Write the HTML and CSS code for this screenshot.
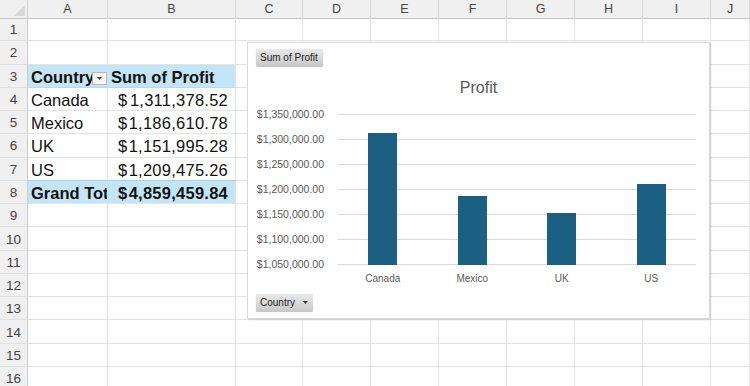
FILE: index.html
```html
<!DOCTYPE html>
<html>
<head>
<meta charset="utf-8">
<link rel="stylesheet" href="styles.css">
</head>
<body>
<div class="sheet">
  <div class="row head">
    <div class="corner"></div>
    <div class="ch">A</div><div class="ch">B</div><div class="ch">C</div><div class="ch">D</div><div class="ch">E</div><div class="ch">F</div><div class="ch">G</div><div class="ch">H</div><div class="ch">I</div><div class="ch">J</div>
  </div>
  <div class="row"><div class="rh">1</div><div class="c"></div><div class="c"></div><div class="c"></div><div class="c"></div><div class="c"></div><div class="c"></div><div class="c"></div><div class="c"></div><div class="c"></div><div class="c"></div></div>
  <div class="row"><div class="rh">2</div><div class="c"></div><div class="c"></div><div class="c"></div><div class="c"></div><div class="c"></div><div class="c"></div><div class="c"></div><div class="c"></div><div class="c"></div><div class="c"></div></div>
  <div class="row"><div class="rh">3</div>
    <div class="c pv-head pv-a"><span class="txt">Country</span><span class="dd"><svg width="7" height="5" viewBox="0 0 7 5"><path d="M1 1h5L3.5 4z" fill="#444"/></svg></span></div>
    <div class="c pv-head"><span class="txt">Sum of Profit</span></div>
    <div class="c"></div><div class="c"></div><div class="c"></div><div class="c"></div><div class="c"></div><div class="c"></div><div class="c"></div><div class="c"></div></div>
  <div class="row"><div class="rh">4</div><div class="c t"><span class="txt">Canada</span></div><div class="c t num"><span>$</span><span class="amt">1,311,378.52</span></div><div class="c"></div><div class="c"></div><div class="c"></div><div class="c"></div><div class="c"></div><div class="c"></div><div class="c"></div><div class="c"></div></div>
  <div class="row"><div class="rh">5</div><div class="c t"><span class="txt">Mexico</span></div><div class="c t num"><span>$</span><span class="amt">1,186,610.78</span></div><div class="c"></div><div class="c"></div><div class="c"></div><div class="c"></div><div class="c"></div><div class="c"></div><div class="c"></div><div class="c"></div></div>
  <div class="row"><div class="rh">6</div><div class="c t"><span class="txt">UK</span></div><div class="c t num"><span>$</span><span class="amt">1,151,995.28</span></div><div class="c"></div><div class="c"></div><div class="c"></div><div class="c"></div><div class="c"></div><div class="c"></div><div class="c"></div><div class="c"></div></div>
  <div class="row"><div class="rh">7</div><div class="c t pre-total"><span class="txt">US</span></div><div class="c t num pre-total"><span>$</span><span class="amt">1,209,475.26</span></div><div class="c"></div><div class="c"></div><div class="c"></div><div class="c"></div><div class="c"></div><div class="c"></div><div class="c"></div><div class="c"></div></div>
  <div class="row"><div class="rh">8</div><div class="c pv-total pv-a"><span class="txt clip">Grand Total</span></div><div class="c pv-total num"><span>$</span><span class="amt">4,859,459.84</span></div><div class="c"></div><div class="c"></div><div class="c"></div><div class="c"></div><div class="c"></div><div class="c"></div><div class="c"></div><div class="c"></div></div>
  <div class="row"><div class="rh">9</div><div class="c"></div><div class="c"></div><div class="c"></div><div class="c"></div><div class="c"></div><div class="c"></div><div class="c"></div><div class="c"></div><div class="c"></div><div class="c"></div></div>
  <div class="row"><div class="rh">10</div><div class="c"></div><div class="c"></div><div class="c"></div><div class="c"></div><div class="c"></div><div class="c"></div><div class="c"></div><div class="c"></div><div class="c"></div><div class="c"></div></div>
  <div class="row"><div class="rh">11</div><div class="c"></div><div class="c"></div><div class="c"></div><div class="c"></div><div class="c"></div><div class="c"></div><div class="c"></div><div class="c"></div><div class="c"></div><div class="c"></div></div>
  <div class="row"><div class="rh">12</div><div class="c"></div><div class="c"></div><div class="c"></div><div class="c"></div><div class="c"></div><div class="c"></div><div class="c"></div><div class="c"></div><div class="c"></div><div class="c"></div></div>
  <div class="row"><div class="rh">13</div><div class="c"></div><div class="c"></div><div class="c"></div><div class="c"></div><div class="c"></div><div class="c"></div><div class="c"></div><div class="c"></div><div class="c"></div><div class="c"></div></div>
  <div class="row"><div class="rh">14</div><div class="c"></div><div class="c"></div><div class="c"></div><div class="c"></div><div class="c"></div><div class="c"></div><div class="c"></div><div class="c"></div><div class="c"></div><div class="c"></div></div>
  <div class="row"><div class="rh">15</div><div class="c"></div><div class="c"></div><div class="c"></div><div class="c"></div><div class="c"></div><div class="c"></div><div class="c"></div><div class="c"></div><div class="c"></div><div class="c"></div></div>
  <div class="row"><div class="rh">16</div><div class="c"></div><div class="c"></div><div class="c"></div><div class="c"></div><div class="c"></div><div class="c"></div><div class="c"></div><div class="c"></div><div class="c"></div><div class="c"></div></div>

  <div class="chart">
    <div class="field-btn">Sum of Profit</div>
    <div class="chart-title">Profit</div>
    <div class="plot-row">
      <div class="y-axis">
        <span>$1,350,000.00</span>
        <span>$1,300,000.00</span>
        <span>$1,250,000.00</span>
        <span>$1,200,000.00</span>
        <span>$1,150,000.00</span>
        <span>$1,100,000.00</span>
        <span>$1,050,000.00</span>
      </div>
      <div class="plot">
        <div class="cat"><div class="bar" style="height:131.7px"></div></div>
        <div class="cat"><div class="bar" style="height:69.3px"></div></div>
        <div class="cat"><div class="bar" style="height:52px"></div></div>
        <div class="cat"><div class="bar" style="height:80.7px"></div></div>
      </div>
    </div>
    <div class="x-axis"><span>Canada</span><span>Mexico</span><span>UK</span><span>US</span></div>
    <div class="field-btn country">Country <svg class="arrow" width="8" height="5" viewBox="0 0 8 5"><path d="M0 0h8L4 5z" fill="#333"/></svg></div>
  </div>
</div>
</body>
</html>
```

FILE: styles.css
```css
* { box-sizing: border-box; }
html, body { margin: 0; padding: 0; background: #fff; }
body { width: 750px; height: 386px; overflow: hidden; }

.sheet {
  position: relative;
  width: 750px;
  height: 386px;
  overflow: hidden;
  font-family: "Liberation Sans", Arial, sans-serif;
  color: #111;
}

.row {
  display: grid;
  grid-template-columns: 28px 80px 128px 67px 68px 68px 68px 68px 68px 68px 39px;
  height: 23.27px;
}
.row.head { height: 18px; }

.corner {
  position: relative;
  background: #f0f0f0;
  border-right: 1px solid #cdcdcd;
  border-bottom: 1px solid #c4c4c4;
}
.corner::after {
  content: "";
  position: absolute;
  right: 2px;
  bottom: 2px;
  border-left: 11px solid transparent;
  border-bottom: 11px solid #d8d8d8;
}

.ch {
  background: #f0f0f0;
  border-right: 1px solid #d6d6d6;
  border-bottom: 1px solid #c4c4c4;
  font-size: 12.5px;
  line-height: 18px;
  color: #444;
  text-align: center;
}

.rh {
  background: #f0f0f0;
  border-right: 1px solid #cdcdcd;
  border-bottom: 1px solid #dedede;
  font-size: 13.5px;
  color: #444;
  display: flex;
  align-items: center;
  justify-content: center;
  padding-top: 1px;
}

.c {
  border-right: 1px solid #e3e3e3;
  border-bottom: 1px solid #e3e3e3;
  overflow: hidden;
  white-space: nowrap;
}

.t, .pv-head, .pv-total {
  display: flex;
  align-items: center;
  padding: 3px 0 0 3px;
  font-size: 16.5px;
  color: #111;
}

.num {
  justify-content: space-between;
  padding-left: 10px;
  padding-right: 7px;
}
.amt { letter-spacing: 0.25px; }

.clip {
  display: block;
  width: 76px;
  overflow: hidden;
}

.pv-head, .pv-total {
  background: #c4e5f5;
  font-weight: bold;
}
.pv-a { border-right-color: #c4e5f5; }
.pv-head { border-bottom-color: #b2dbef; position: relative; }
.pre-total { border-bottom-color: #9fd1ea; }
.pv-total { border-bottom-color: #dfe8ec; }

.dd {
  position: absolute;
  right: 0;
  top: 7px;
  width: 15px;
  height: 13px;
  background: #f5f5f5;
  border: 1px solid #b9b9b9;
  display: flex;
  align-items: center;
  justify-content: center;
}

/* chart */
.chart {
  position: absolute;
  left: 247px;
  top: 42px;
  width: 463px;
  height: 277px;
  background: #fff;
  border: 1px solid #dadada;
  box-shadow: 1px 1px 2px rgba(0,0,0,0.12);
  padding: 6px 0 0 8px;
  display: flex;
  flex-direction: column;
  align-items: flex-start;
  font-family: "Liberation Sans", Arial, sans-serif;
}

.field-btn {
  height: 17px;
  line-height: 17px;
  padding: 0 5px 0 4px;
  font-size: 10px;
  color: #1e1e1e;
  background: linear-gradient(#e9e9e9, #c9c9c9);
  border-radius: 1px;
  box-shadow: 0 1px 1px rgba(0,0,0,0.25);
  display: flex;
  align-items: center;
}
.field-btn.country {
  margin-top: 9px;
  width: 57px;
  gap: 8px;
}
.arrow { display: block; }

.chart-title {
  align-self: stretch;
  margin-top: 12px;
  padding-right: 8px;
  text-align: center;
  font-size: 16px;
  line-height: 20px;
  color: #595959;
}

.plot-row {
  display: flex;
  gap: 14px;
  margin-top: 10px;
}

.y-axis {
  width: 68px;
  height: 162px;
  display: flex;
  flex-direction: column;
  justify-content: space-between;
  align-items: flex-end;
  font-size: 10.5px;
  line-height: 12px;
  color: #595959;
}

.plot {
  width: 358px;
  height: 151px;
  margin-top: 6px;
  display: flex;
  background: repeating-linear-gradient(to bottom, #d9d9d9 0, #d9d9d9 1px, transparent 1px, transparent 25px);
}
.cat {
  flex: 1;
  display: flex;
  justify-content: center;
  align-items: flex-end;
}
.bar {
  width: 29px;
  background: #1b5f82;
}

.x-axis {
  margin-left: 82px;
  margin-top: 3px;
  width: 358px;
  display: flex;
  font-size: 10px;
  line-height: 12px;
  color: #595959;
}
.x-axis span {
  flex: 1;
  text-align: center;
}
```
